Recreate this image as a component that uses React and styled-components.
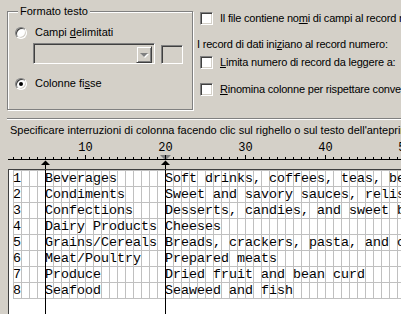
import React from 'react'
import styled, { createGlobalStyle } from 'styled-components'

const GlobalStyle = createGlobalStyle`
  html, body { margin: 0; padding: 0; overflow: hidden; background: #d4d0c8; }
  body { font-family: "Liberation Sans", Arial, sans-serif; font-size: 11px; color: #000; }
`

const rows = [
  ['1', 'Beverages', 'Soft drinks, coffees, teas, beers, and ales'],
  ['2', 'Condiments', 'Sweet and savory sauces, relishes, spreads, and seasonings'],
  ['3', 'Confections', 'Desserts, candies, and sweet breads'],
  ['4', 'Dairy Products', 'Cheeses'],
  ['5', 'Grains/Cereals', 'Breads, crackers, pasta, and cereal'],
  ['6', 'Meat/Poultry', 'Prepared meats'],
  ['7', 'Produce', 'Dried fruit and bean curd'],
  ['8', 'Seafood', 'Seaweed and fish'],
]

const Dialog = styled.div`
  width: 401px;
  height: 314px;
  overflow: hidden;
  display: flex;
  flex-direction: column;
`

const Top = styled.div`
  display: flex;
  height: 118px;
  flex: none;
`

const Group = styled.div`
  position: relative;
  box-sizing: border-box;
  margin: 11px 0 0 7px;
  width: 186px;
  height: 99px;
  padding: 14px 0 0 7px;
  border: 1px solid #808080;
  box-shadow: 1px 1px 0 #fff, inset 1px 1px 0 #fff;
  flex: none;
`

const Legend = styled.span`
  position: absolute;
  top: -7px;
  left: 10px;
  padding: 0 2px;
  line-height: 13px;
  background: #d4d0c8;
`

const OptionRow = styled.div`
  display: flex;
  align-items: center;
  height: 13px;
  line-height: 13px;
  white-space: nowrap;
  margin-top: ${p => p.$top || 0}px;
  padding-left: ${p => p.$indent || 0}px;
`

const Radio = styled.span`
  position: relative;
  box-sizing: border-box;
  width: 12px;
  height: 12px;
  margin-right: 8px;
  border-radius: 50%;
  background: #fff;
  border: 1px solid;
  border-color: #808080 #fff #fff #808080;
  box-shadow: inset 1px 1px 0 #404040, inset -1px -1px 0 #d4d0c8;
  flex: none;
  &::after {
    content: '';
    display: ${p => (p.$checked ? 'block' : 'none')};
    position: absolute;
    left: 3px;
    top: 3px;
    width: 4px;
    height: 4px;
    border-radius: 50%;
    background: #000;
  }
`

const Check = styled.span`
  box-sizing: border-box;
  width: 13px;
  height: 13px;
  margin-right: 7px;
  background: #fff;
  border: 1px solid;
  border-color: #808080 #fff #fff #808080;
  box-shadow: inset 1px 1px 0 #404040, inset -1px -1px 0 #d4d0c8;
  flex: none;
`

const ComboRow = styled.div`
  display: flex;
  align-items: flex-start;
  gap: 6px;
  margin-top: 4px;
  padding-left: 18px;
`

const Sunken = styled.div`
  box-sizing: border-box;
  width: ${p => p.$w}px;
  height: ${p => p.$h}px;
  margin-top: ${p => p.$top || 0}px;
  border: 1px solid;
  border-color: #808080 #fff #fff #808080;
  box-shadow: inset 1px 1px 0 #404040, inset -1px -1px 0 #d4d0c8;
  background: #d4d0c8;
  display: flex;
  justify-content: flex-end;
  padding: 2px;
`

const DropButton = styled.span`
  box-sizing: border-box;
  width: 16px;
  height: 17px;
  background: #d4d0c8;
  border: 1px solid;
  border-color: #d4d0c8 #404040 #404040 #d4d0c8;
  box-shadow: inset 1px 1px 0 #fff, inset -1px -1px 0 #808080;
  display: flex;
  align-items: center;
  justify-content: center;
  &::after {
    content: '';
    width: 0;
    height: 0;
    border-left: 4px solid transparent;
    border-right: 4px solid transparent;
    border-top: 4px solid #808080;
    filter: drop-shadow(1px 1px 0 #fff);
  }
`

const Options = styled.div`
  margin-left: 4px;
  padding-top: 12px;
  letter-spacing: -0.2px;
  flex: none;
`

const Separator = styled.div`
  margin-left: 7px;
  border-top: 1px solid #808080;
  border-bottom: 1px solid #fff;
  flex: none;
`

const Hint = styled.div`
  margin-top: 4px;
  padding-left: 10px;
  line-height: 13px;
  white-space: nowrap;
  flex: none;
`

const RulerSvg = styled.svg`
  display: block;
  flex: none;
`

const Preview = styled.div`
  position: relative;
  flex: 1;
  margin-left: 8px;
  width: 600px;
  padding-left: 4px;
  background: #fff;
  border-top: 1px solid #404040;
  border-left: 1px solid #404040;
`

const Grid = styled.div`
  width: 489px;
  height: 129px;
  background-image:
    linear-gradient(to right, #c0c0c0 1px, transparent 1px),
    linear-gradient(to bottom, #c0c0c0 1px, transparent 1px);
  background-size: 8px 100%, 100% 16px;
`

const DataRow = styled.div`
  display: flex;
  height: 16px;
  line-height: 18px;
  font-family: "Liberation Mono", "Courier New", monospace;
  font-size: 13.33px;
  white-space: pre;
`

const Field = styled.span`
  flex: none;
  width: ${p => (p.$cols ? p.$cols * 8 + 'px' : 'auto')};
  overflow: hidden;
`

const BreakLine = styled.div`
  position: absolute;
  top: 0;
  bottom: 0;
  left: ${p => p.$x}px;
  width: 1px;
  background: #000;
`

function Ruler() {
  const ticks = []
  for (let n = 1; n <= 60; n++) {
    const x = 5 + 8 * n
    const big = n % 10 === 0
    ticks.push(<rect key={'t' + n} x={x} y={big ? 18 : 20} width="1" height={big ? 4 : 2} fill="#000" />)
    if (big) {
      ticks.push(
        <text key={'n' + n} x={x + 0.5} y="14" textAnchor="middle" fontFamily="'Liberation Mono', monospace" fontSize="12" fill="#000">
          {n}
        </text>
      )
    }
  }
  return (
    <RulerSvg width="401" height="32" viewBox="0 0 401 32">
      <polygon points="160,18 171,18 165.5,23.5" fill="#808080" />
      <rect x="8" y="22" width="393" height="1" fill="#000" />
      {ticks}
      {[45, 165].map(x => (
        <g key={x}>
          <polygon points={`${x + 0.5},23.5 ${x - 4},28 ${x + 5},28`} fill="#000" />
          <rect x={x} y="28" width="1" height="4" fill="#000" />
        </g>
      ))}
    </RulerSvg>
  )
}

export default function App() {
  return (
    <>
      <GlobalStyle />
      <Dialog>
        <Top>
          <Group>
            <Legend>Formato testo</Legend>
            <OptionRow>
              <Radio />
              <span>Campi <u>d</u>elimitati</span>
            </OptionRow>
            <ComboRow>
              <Sunken $w={122} $h={21}>
                <DropButton />
              </Sunken>
              <Sunken $w={22} $h={19} $top={2} />
            </ComboRow>
            <OptionRow $top={13}>
              <Radio $checked />
              <span>Colonne fi<u>s</u>se</span>
            </OptionRow>
          </Group>
          <Options>
            <OptionRow $indent={3}>
              <Check />
              <span>Il file contiene no<u>m</u>i di campi al record n</span>
            </OptionRow>
            <OptionRow $top={13}>
              <span>I record di dati ini<u>z</u>iano al record numero:</span>
            </OptionRow>
            <OptionRow $top={5} $indent={3}>
              <Check />
              <span><u>L</u>imita numero di record da leggere a:</span>
            </OptionRow>
            <OptionRow $top={14} $indent={3}>
              <Check />
              <span><u>R</u>inomina colonne per rispettare convenzioni</span>
            </OptionRow>
          </Options>
        </Top>
        <Separator />
        <Hint>Specificare interruzioni di colonna facendo clic sul righello o sul testo dell'anteprima.</Hint>
        <Ruler />
        <Preview>
          <Grid>
            {rows.map(([id, cat, desc]) => (
              <DataRow key={id}>
                <Field $cols={4}>{id}</Field>
                <Field $cols={15}>{cat}</Field>
                <Field>{desc}</Field>
              </DataRow>
            ))}
          </Grid>
          <BreakLine $x={36} />
          <BreakLine $x={156} />
        </Preview>
      </Dialog>
    </>
  )
}
